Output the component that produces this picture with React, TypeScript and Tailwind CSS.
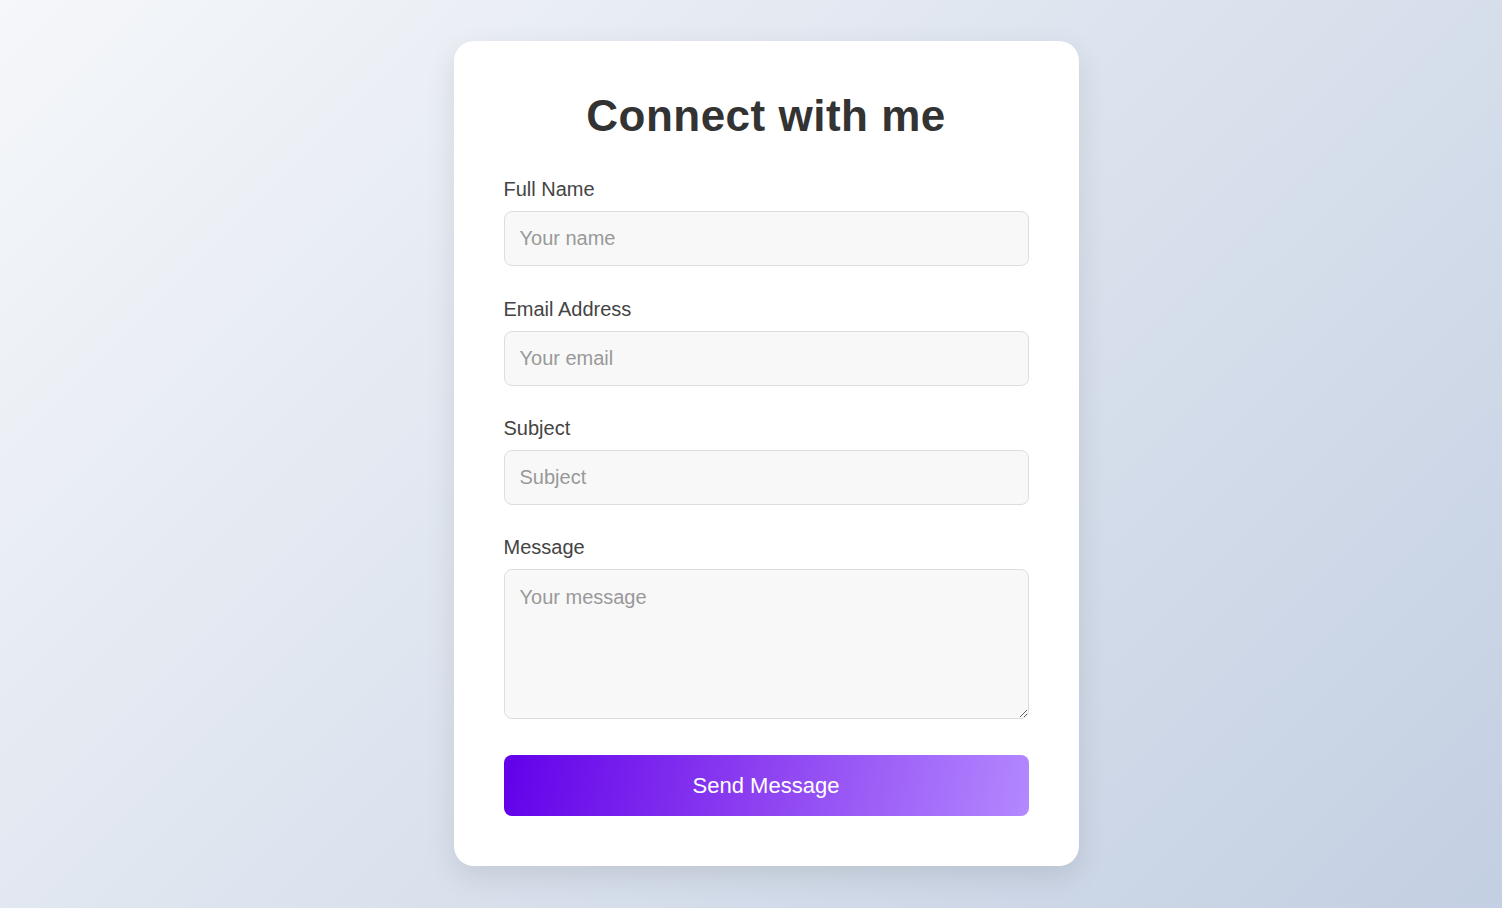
import React from "react";

const fields = [
  { id: "name", label: "Full Name", placeholder: "Your name", type: "text", gap: "mb-[31px]" },
  { id: "email", label: "Email Address", placeholder: "Your email", type: "email", gap: "mb-[30px]" },
  { id: "subject", label: "Subject", placeholder: "Subject", type: "text", gap: "mb-[30px]" },
];

const inputClass =
  "w-full h-[55px] px-[15px] rounded-lg border border-[#dddddd] bg-[#f8f8f8] text-[20px] text-[#333] placeholder:text-[#999] outline-none";

export default function App() {
  return (
    <div className="min-h-[908px] w-full bg-[linear-gradient(135deg,#f5f7fa_0%,#c3cfe2_100%)] flex justify-center pl-[30px] pt-[41px] font-['Liberation_Sans',Arial,sans-serif]">
      <div className="w-[625px] h-[825px] bg-white rounded-[20px] shadow-[0_10px_30px_rgba(0,0,0,0.1)] p-[50px]">
        <h1 className="text-[44px] leading-[50px] font-bold text-[#333] text-center tracking-[0.5px] mb-[36px]">
          Connect with me
        </h1>

        <form onSubmit={(e) => e.preventDefault()}>
          {fields.map((f) => (
            <div key={f.id} className={f.gap}>
              <label htmlFor={f.id} className="block text-[20px] leading-[24px] text-[#444] mb-[10px]">
                {f.label}
              </label>
              <input id={f.id} type={f.type} placeholder={f.placeholder} className={inputClass} />
            </div>
          ))}

          <div className="mb-[36px]">
            <label htmlFor="message" className="block text-[20px] leading-[24px] text-[#444] mb-[10px]">
              Message
            </label>
            <textarea
              id="message"
              placeholder="Your message"
              className="block w-full h-[150px] px-[15px] py-[15px] rounded-lg border border-[#dddddd] bg-[#f8f8f8] text-[20px] leading-[24px] text-[#333] placeholder:text-[#999] outline-none resize-y"
            />
          </div>

          <button
            type="submit"
            className="w-full h-[61px] rounded-lg bg-[linear-gradient(100deg,#6200ea_0%,#8a3cf0_45%,#b388ff_100%)] text-white text-[22px]"
          >
            Send Message
          </button>
        </form>
      </div>
    </div>
  );
}
